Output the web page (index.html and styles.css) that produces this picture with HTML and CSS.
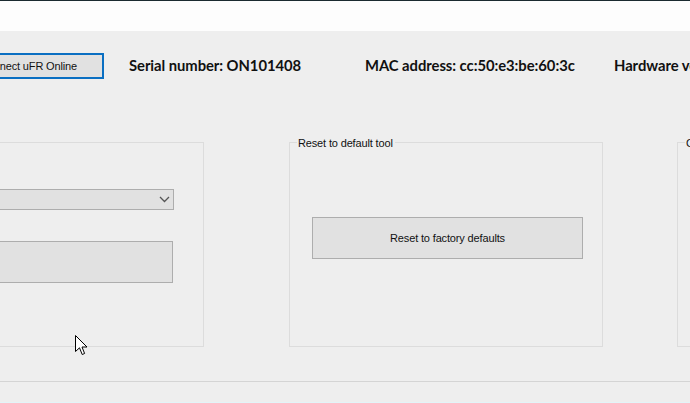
FILE: index.html
```html
<!DOCTYPE html>
<html>
<head>
<meta charset="utf-8">
<link rel="stylesheet" href="styles.css">
</head>
<body>
<div class="window">
  <div class="topbar"></div>
  <div class="info-row">
    <button class="btn btn-connect">Connect uFR Online</button>
    <div class="info serial">Serial number: ON101408</div>
    <div class="info mac">MAC address: cc:50:e3:be:60:3c</div>
    <div class="info hw">Hardware version</div>
  </div>
  <div class="groups">
    <div class="group group-left">
      <div class="combo"><span class="combo-arrow"><svg width="11" height="7" viewBox="0 0 11 7"><path d="M1 1 L5.5 5.5 L10 1" fill="none" stroke="#555" stroke-width="1.3"/></svg></span></div>
      <button class="btn btn-left"></button>
    </div>
    <div class="group group-mid">
      <span class="legend">Reset to default tool</span>
      <button class="btn btn-reset">Reset to factory defaults</button>
    </div>
    <div class="group group-right">
      <span class="legend">Config</span>
    </div>
  </div>
  <div class="separator"></div>
  <div class="bottom-edge"></div>
  <svg class="cursor" width="13" height="21" viewBox="0 0 13 21"><path d="M0.5 0.5 L0.5 16.5 L4.5 12.8 L7.2 19.5 L9.6 18.5 L7 12 L12 12 Z" fill="#fff" stroke="#000" stroke-width="1" stroke-linejoin="miter"/></svg>
</div>
</body>
</html>
```
FILE: styles.css
```css
html, body {
  margin: 0;
  padding: 0;
  background: #eeeeee;
}
.window {
  position: relative;
  width: 690px;
  height: 403px;
  overflow: hidden;
  background: #eeeeee;
  font-family: "Liberation Sans", Arial, sans-serif;
  font-size: 11px;
  letter-spacing: -0.15px;
  color: #000;
}
.topbar {
  height: 30px;
  background: #fdfdfd;
  border-top: 1px solid #1b2a30;
}
.btn {
  font-family: "Liberation Sans", Arial, sans-serif;
  font-size: 11px;
  letter-spacing: -0.15px;
  color: #111;
  background: #e1e1e1;
  border: 1px solid #adadad;
  padding: 0;
  margin: 0;
  box-sizing: border-box;
}
.info-row {
  display: flex;
  align-items: center;
  margin-top: 22px;
  margin-left: -47px;
  height: 26px;
  white-space: nowrap;
}
.btn-connect {
  width: 151px;
  height: 26px;
  border: 2px solid #0a6fc2;
  flex: none;
}
.info {
  font-family: Lato, "Open Sans", sans-serif;
  font-weight: 700;
  font-size: 14.8px;
  letter-spacing: -0.05px;
  color: #111;
  flex: none;
  position: relative;
  top: -1px;
}
.serial { margin-left: 25px; width: 236px; }
.mac { width: 249px; }
.groups {
  display: flex;
  margin-top: 63px;
  margin-left: -100px;
}
.group {
  position: relative;
  box-sizing: border-box;
  height: 205px;
  border: 1px solid #dcdcdc;
  flex: none;
}
.group-left {
  width: 304px;
  display: flex;
  flex-direction: column;
  align-items: flex-end;
  padding-top: 46px;
}
.group-mid {
  width: 314px;
  margin-left: 85px;
  padding: 74px 19px 0 22px;
}
.group-right {
  width: 200px;
  margin-left: 74px;
}
.legend {
  position: absolute;
  top: -6px;
  left: 7px;
  padding: 0 2px 0 1px;
  background: #eeeeee;
  line-height: 13px;
  color: #111;
}
.combo {
  width: 200px;
  height: 21px;
  box-sizing: border-box;
  background: #e1e1e1;
  border: 1px solid #adadad;
  margin-right: 29px;
  display: flex;
  justify-content: flex-end;
  align-items: center;
  padding-right: 3px;
}
.combo-arrow { display: flex; }
.btn-left {
  width: 200px;
  height: 42px;
  margin-top: 31px;
  margin-right: 30px;
}
.btn-reset {
  display: block;
  width: 271px;
  height: 42px;
}
.separator {
  margin-top: 34px;
  height: 1px;
  background: #d4d4d4;
}
.bottom-edge {
  margin-top: 20px;
  height: 1px;
  background: #e3f4f8;
}
.cursor {
  position: absolute;
  left: 75px;
  top: 335px;
}
```
